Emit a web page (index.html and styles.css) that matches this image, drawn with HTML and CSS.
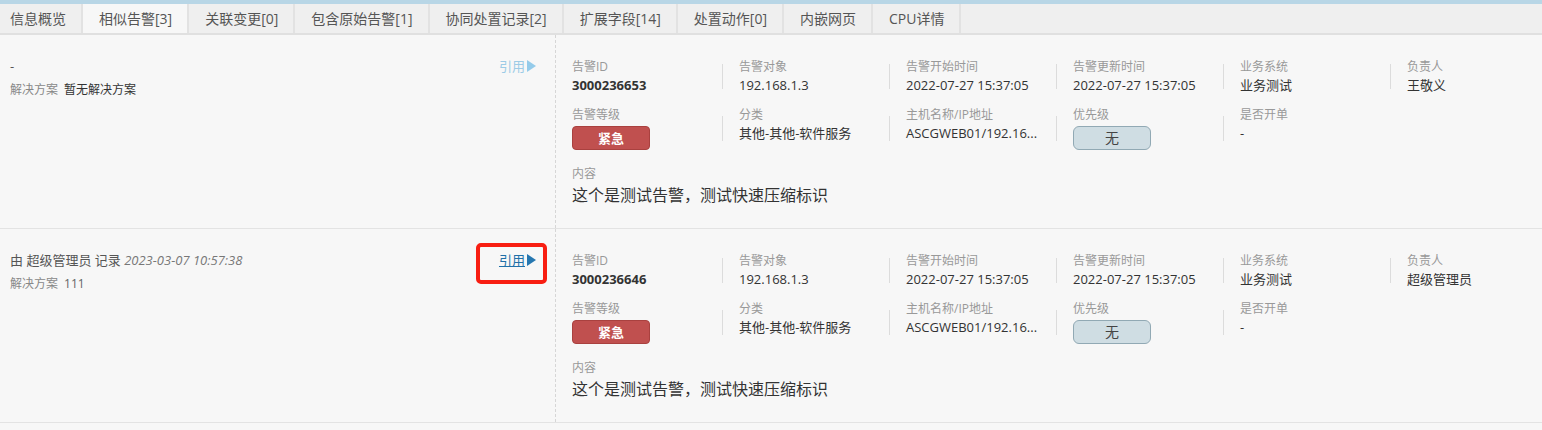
FILE: index.html
```html
<!DOCTYPE html>
<html lang="zh-CN">
<head>
<meta charset="utf-8">
<title>相似告警</title>
<link rel="stylesheet" href="styles.css">
</head>
<body>
<nav class="tabs">
  <a class="tab">信息概览</a>
  <a class="tab active">相似告警[3]</a>
  <a class="tab">关联变更[0]</a>
  <a class="tab">包含原始告警[1]</a>
  <a class="tab">协同处置记录[2]</a>
  <a class="tab">扩展字段[14]</a>
  <a class="tab">处置动作[0]</a>
  <a class="tab">内嵌网页</a>
  <a class="tab">CPU详情</a>
</nav>

<div class="list">
  <section class="item">
    <div class="item-left">
      <div class="left-info">
        <div class="recorder">-</div>
        <div class="solution"><span class="sol-label">解决方案</span><span class="sol-text">暂无解决方案</span></div>
      </div>
      <a class="cite cite-disabled">引用<svg class="tri" width="9" height="12" viewBox="0 0 9 12"><path d="M0 0L9 6L0 12Z" fill="currentColor"/></svg></a>
    </div>
    <div class="item-right">
      <div class="fields">
        <div class="field"><div class="label">告警ID</div><div class="value strong">3000236653</div></div>
        <div class="field"><div class="label">告警对象</div><div class="value">192.168.1.3</div></div>
        <div class="field"><div class="label">告警开始时间</div><div class="value">2022-07-27 15:37:05</div></div>
        <div class="field"><div class="label">告警更新时间</div><div class="value">2022-07-27 15:37:05</div></div>
        <div class="field"><div class="label">业务系统</div><div class="value">业务测试</div></div>
        <div class="field"><div class="label">负责人</div><div class="value">王敬义</div></div>
        <div class="field"><div class="label">告警等级</div><div class="badge badge-urgent">紧急</div></div>
        <div class="field"><div class="label">分类</div><div class="value">其他-其他-软件服务</div></div>
        <div class="field"><div class="label">主机名称/IP地址</div><div class="value">ASCGWEB01/192.16...</div></div>
        <div class="field"><div class="label">优先级</div><div class="badge badge-none">无</div></div>
        <div class="field"><div class="label">是否开单</div><div class="value">-</div></div>
      </div>
      <div class="content">
        <div class="label">内容</div>
        <div class="content-text">这个是测试告警，测试快速压缩标识</div>
      </div>
    </div>
  </section>

  <section class="item">
    <div class="item-left">
      <div class="left-info">
        <div class="recorder">由 超级管理员 记录 <em class="rec-time">2023-03-07 10:57:38</em></div>
        <div class="solution"><span class="sol-label">解决方案</span><span class="sol-text muted">111</span></div>
      </div>
      <a class="cite cite-active marked">引用<svg class="tri" width="9" height="12" viewBox="0 0 9 12"><path d="M0 0L9 6L0 12Z" fill="currentColor"/></svg></a>
    </div>
    <div class="item-right">
      <div class="fields">
        <div class="field"><div class="label">告警ID</div><div class="value strong">3000236646</div></div>
        <div class="field"><div class="label">告警对象</div><div class="value">192.168.1.3</div></div>
        <div class="field"><div class="label">告警开始时间</div><div class="value">2022-07-27 15:37:05</div></div>
        <div class="field"><div class="label">告警更新时间</div><div class="value">2022-07-27 15:37:05</div></div>
        <div class="field"><div class="label">业务系统</div><div class="value">业务测试</div></div>
        <div class="field"><div class="label">负责人</div><div class="value">超级管理员</div></div>
        <div class="field"><div class="label">告警等级</div><div class="badge badge-urgent">紧急</div></div>
        <div class="field"><div class="label">分类</div><div class="value">其他-其他-软件服务</div></div>
        <div class="field"><div class="label">主机名称/IP地址</div><div class="value">ASCGWEB01/192.16...</div></div>
        <div class="field"><div class="label">优先级</div><div class="badge badge-none">无</div></div>
        <div class="field"><div class="label">是否开单</div><div class="value">-</div></div>
      </div>
      <div class="content">
        <div class="label">内容</div>
        <div class="content-text">这个是测试告警，测试快速压缩标识</div>
      </div>
    </div>
  </section>
</div>
</body>
</html>
```

FILE: styles.css
```css
* { box-sizing: border-box; }

html, body {
  margin: 0;
  padding: 0;
}

body {
  background: #f7f7f7;
  font-family: "Open Sans", "Noto Sans CJK SC", sans-serif;
  color: #333;
  overflow: hidden;
}

/* ---------- tabs ---------- */
.tabs {
  display: flex;
  height: 35px;
  border-top: 4px solid #b8d6e6;
  border-bottom: 2px solid #e0e0e0;
  background: #efefef;
}

.tab {
  display: block;
  height: 29px;
  line-height: 30px;
  padding: 0 15px 0 16px;
  font-size: 14px;
  color: #555;
  border-right: 2px solid #e2e2e2;
  white-space: nowrap;
  cursor: pointer;
}

.tab:first-child { padding-left: 10px; }

.tab.active { background: #f7f7f7; }

/* ---------- list ---------- */
.item {
  display: flex;
  border-bottom: 1px solid #e3e3e3;
}

.item-left {
  width: 555px;
  flex: none;
  display: flex;
  justify-content: space-between;
  align-items: flex-start;
  padding: 21px 19px 0 10px;
}

.recorder {
  font-size: 13px;
  line-height: 20px;
  color: #555;
}

.rec-time {
  color: #777;
}

.solution {
  margin-top: 5px;
  font-size: 12px;
  line-height: 18px;
}

.sol-label { color: #888; }
.sol-text { color: #333; margin-left: 6px; }
.sol-text.muted { color: #666; }

.cite {
  position: relative;
  display: flex;
  align-items: center;
  font-size: 13px;
  line-height: 20px;
  cursor: pointer;
}

.cite .tri { margin-left: 2px; }

.cite-disabled { color: #9ccbe6; }
.cite-disabled .tri { color: #94cbea; }

.cite-active { color: #2070a8; text-decoration: underline; }
.cite-active .tri { color: #2677b0; }

.marked::after {
  content: "";
  position: absolute;
  left: -23px;
  right: -11px;
  top: -7px;
  bottom: -14px;
  border: 4px solid #f81e12;
  border-radius: 5px;
}

/* ---------- right ---------- */
.item-right {
  flex: 1;
  min-width: 0;
  border-left: 1px dashed #d6d6d6;
  padding: 23px 0 21px 0;
}

.fields {
  display: grid;
  grid-template-columns: repeat(6, 167px);
  row-gap: 12px;
}

.field {
  position: relative;
  padding: 0 15px 0 16px;
  min-width: 0;
}

.field:not(:nth-child(6n+1))::before {
  content: "";
  position: absolute;
  left: -1px;
  top: 50%;
  height: 25px;
  margin-top: -12px;
  border-left: 1px solid #dcdcdc;
}

.label {
  font-size: 12px;
  line-height: 18px;
  color: #999;
}

.value {
  font-size: 13px;
  line-height: 18px;
  color: #333;
  white-space: nowrap;
}

.value.strong { font-weight: 700; }

.badge {
  width: 78px;
  height: 24px;
  margin-top: 2px;
  border-radius: 4px;
  text-align: center;
  line-height: 22px;
}

.badge-urgent {
  background: #c0504f;
  border: 1px solid #a9413f;
  color: #fff;
  font-size: 13px;
  font-weight: 700;
}

.badge-none {
  background: #cfdde3;
  border: 1px solid #91a9b4;
  border-radius: 6px;
  color: #444;
  font-size: 14px;
}

.content {
  margin-top: 15px;
  padding-left: 16px;
}

.content-text {
  font-size: 16px;
  line-height: 24px;
  color: #333;
}
```
